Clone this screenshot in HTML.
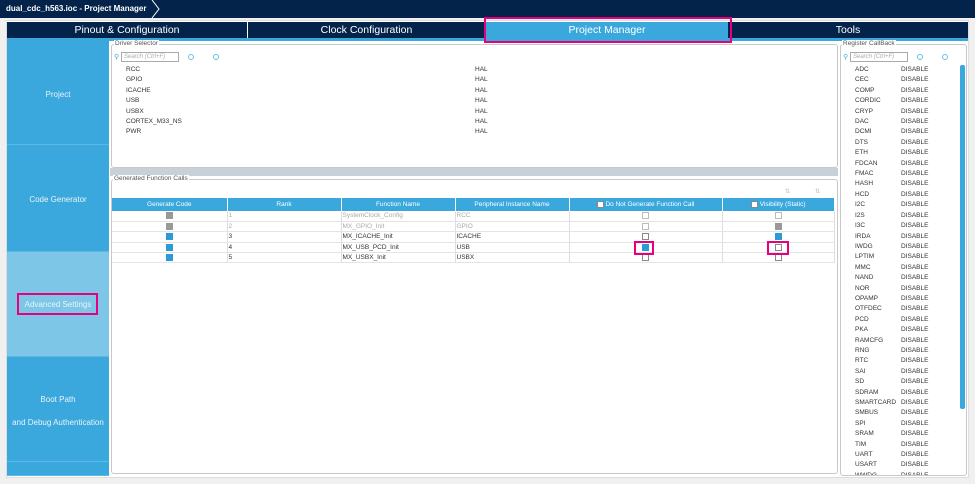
<!DOCTYPE html><html><head><style>
*{margin:0;padding:0;box-sizing:border-box}
body{width:975px;height:484px;background:#f0f0f0;font-family:"Liberation Sans",sans-serif;position:relative;overflow:hidden;font-size:7px;color:#333}
.a{position:absolute}
.tab{position:absolute;top:22px;height:16px;background:#03234b;color:#fff;font-size:10.5px;text-align:center;line-height:16px}
.side{position:absolute;left:7px;width:102px;background:#3aa8dc;color:#e8f4fb;font-size:8px;text-align:center;border-bottom:1px solid #5cb8e4}
.panel{position:absolute;background:#fff;border:1px solid #c8c8c8;border-radius:3px}
.lbl{position:absolute;background:#fff;font-size:6.5px;color:#555;padding:0 1px}
.srch{position:absolute;width:58px;height:10px;border:1px solid #aaa;font-size:6px;color:#aaa;font-style:italic;line-height:9px;padding-left:2px}
.ic{position:absolute;width:6px;height:6px;border:1px solid #6bbfe6;border-radius:50%}
table{border-collapse:collapse;position:absolute;left:112px;top:198px;width:723px;font-size:6.5px}
th{background:#3aa8dc;color:#fff;font-weight:normal;height:13px;border-right:1px solid #fff}
td{height:10.4px;border-right:1px solid #ddd;border-bottom:1px solid #e4e4e4;padding:0 1px;line-height:9px}
.cb{display:inline-block;width:7px;height:7px;border:1px solid #888;background:#fff;vertical-align:middle}
.ck{background:#2a9bd6;border-color:#2a9bd6}
.gk{background:#999;border-color:#999}
.g{color:#aaa}
.hl{position:absolute;border:2px solid #e6007e}
</style></head><body>
<div class="a" style="left:0;top:0;width:975px;height:18px;background:#03234b"></div>
<div class="a" style="left:6px;top:4px;color:#fff;font-size:8px;font-weight:bold">dual_cdc_h563.ioc - Project Manager</div>
<svg class="a" style="left:150px;top:0" width="10" height="18"><path d="M2 0L9 9L2 18" stroke="#fff" fill="none" stroke-width="1"/></svg>
<div class="a" style="left:6px;top:20px;width:963px;height:458px;background:#fff;border:1px solid #ddd"></div>
<div class="tab" style="left:7px;width:240px">Pinout &amp; Configuration</div>
<div class="tab" style="left:248px;width:237px">Clock Configuration</div>
<div class="tab" style="left:486px;width:242px;background:#3aa8dc">Project Manager</div>
<div class="tab" style="left:728px;width:240px">Tools</div>
<div class="a" style="left:7px;top:38px;width:961px;height:3px;background:#3aa8dc"></div>
<div class="hl" style="left:484px;top:17px;width:248px;height:26px"></div>
<div class="side" style="top:41px;height:104px;line-height:108px">Project</div>
<div class="side" style="top:145px;height:107px;line-height:109px">Code Generator</div>
<div class="side" style="top:252px;height:105px;line-height:105px;background:#7dc6e8">Advanced Settings</div>
<div class="hl" style="left:17px;top:293px;width:81px;height:22px"></div>
<div class="side" style="top:357px;height:105px;padding-top:31px;line-height:23px">Boot Path<br>and Debug Authentication</div>
<div class="side" style="top:462px;height:14px"></div>
<div class="a" style="left:110px;top:168px;width:728px;height:8px;background:#c8d0d8"></div>
<div class="panel" style="left:111px;top:44px;width:727px;height:124px"></div>
<div class="lbl" style="left:114px;top:40px">Driver Selector</div>
<div class="a" style="left:114px;top:53px;color:#3aa8dc;font-size:7px">&#9906;</div>
<div class="srch" style="left:121px;top:52px">Search (Ctrl+F)</div>
<div class="ic" style="left:188px;top:54px"></div><div class="ic" style="left:213px;top:54px"></div>
<div class="a" style="left:126px;top:65px;line-height:10.4px;font-size:6.5px">RCC<br>GPIO<br>ICACHE<br>USB<br>USBX<br>CORTEX_M33_NS<br>PWR</div>
<div class="a" style="left:475px;top:65px;line-height:10.4px;font-size:6.5px">HAL<br>HAL<br>HAL<br>HAL<br>HAL<br>HAL<br>HAL</div>
<div class="panel" style="left:111px;top:179px;width:727px;height:295px"></div>
<div class="lbl" style="left:113px;top:175px">Generated Function Calls</div>
<div class="a" style="left:785px;top:188px;color:#bbb;font-size:6px">⇅</div><div class="a" style="left:815px;top:188px;color:#bbb;font-size:6px">⇅</div>
<table>
<tr><th style="width:115px">Generate Code</th><th style="width:114px">Rank</th><th style="width:114px">Function Name</th><th style="width:114px">Peripheral Instance Name</th><th style="width:153px"><span class="cb"></span> Do Not Generate Function Call</th><th><span class="cb"></span> Visibility (Static)</th></tr>
<tr><td align=center><span class="cb gk"></span></td><td class="g">1</td><td class="g">SystemClock_Config</td><td class="g">RCC</td><td align=center><span class="cb" style="border-color:#bbb"></span></td><td align=center><span class="cb" style="border-color:#bbb"></span></td></tr>
<tr><td align=center><span class="cb gk"></span></td><td class="g">2</td><td class="g">MX_GPIO_Init</td><td class="g">GPIO</td><td align=center><span class="cb" style="border-color:#bbb"></span></td><td align=center><span class="cb gk"></span></td></tr>
<tr><td align=center><span class="cb ck"></span></td><td>3</td><td>MX_ICACHE_Init</td><td>ICACHE</td><td align=center><span class="cb"></span></td><td align=center><span class="cb ck"></span></td></tr>
<tr><td align=center><span class="cb ck"></span></td><td>4</td><td>MX_USB_PCD_Init</td><td>USB</td><td align=center><span class="cb ck"></span></td><td align=center><span class="cb"></span></td></tr>
<tr><td align=center><span class="cb ck"></span></td><td>5</td><td>MX_USBX_Init</td><td>USBX</td><td align=center><span class="cb"></span></td><td align=center><span class="cb"></span></td></tr>
</table>
<div class="hl" style="left:634px;top:241px;width:20px;height:14px"></div>
<div class="hl" style="left:767px;top:241px;width:22px;height:14px"></div>
<div class="panel" style="left:840px;top:44px;width:127px;height:432px;overflow:hidden"></div>
<div class="lbl" style="left:842px;top:40px">Register CallBack</div>
<div class="a" style="left:843px;top:53px;color:#3aa8dc;font-size:7px">&#9906;</div>
<div class="srch" style="left:850px;top:52px">Search (Ctrl+F)</div>
<div class="ic" style="left:917px;top:54px"></div><div class="ic" style="left:942px;top:54px"></div>
<div class="a" style="left:960px;top:65px;width:5px;height:344px;background:#3aa8dc;border-radius:2px"></div>
<div class="a" style="left:842px;top:65px;width:117px;height:410px;overflow:hidden">
<div style="position:absolute;left:13px;top:0;line-height:10.4px;font-size:6.5px">ADC<br>CEC<br>COMP<br>CORDIC<br>CRYP<br>DAC<br>DCMI<br>DTS<br>ETH<br>FDCAN<br>FMAC<br>HASH<br>HCD<br>I2C<br>I2S<br>I3C<br>IRDA<br>IWDG<br>LPTIM<br>MMC<br>NAND<br>NOR<br>OPAMP<br>OTFDEC<br>PCD<br>PKA<br>RAMCFG<br>RNG<br>RTC<br>SAI<br>SD<br>SDRAM<br>SMARTCARD<br>SMBUS<br>SPI<br>SRAM<br>TIM<br>UART<br>USART<br>WWDG</div>
<div style="position:absolute;left:59px;top:0;line-height:10.4px;font-size:6.5px">DISABLE<br>DISABLE<br>DISABLE<br>DISABLE<br>DISABLE<br>DISABLE<br>DISABLE<br>DISABLE<br>DISABLE<br>DISABLE<br>DISABLE<br>DISABLE<br>DISABLE<br>DISABLE<br>DISABLE<br>DISABLE<br>DISABLE<br>DISABLE<br>DISABLE<br>DISABLE<br>DISABLE<br>DISABLE<br>DISABLE<br>DISABLE<br>DISABLE<br>DISABLE<br>DISABLE<br>DISABLE<br>DISABLE<br>DISABLE<br>DISABLE<br>DISABLE<br>DISABLE<br>DISABLE<br>DISABLE<br>DISABLE<br>DISABLE<br>DISABLE<br>DISABLE<br>DISABLE</div>
</div>
</body></html>
